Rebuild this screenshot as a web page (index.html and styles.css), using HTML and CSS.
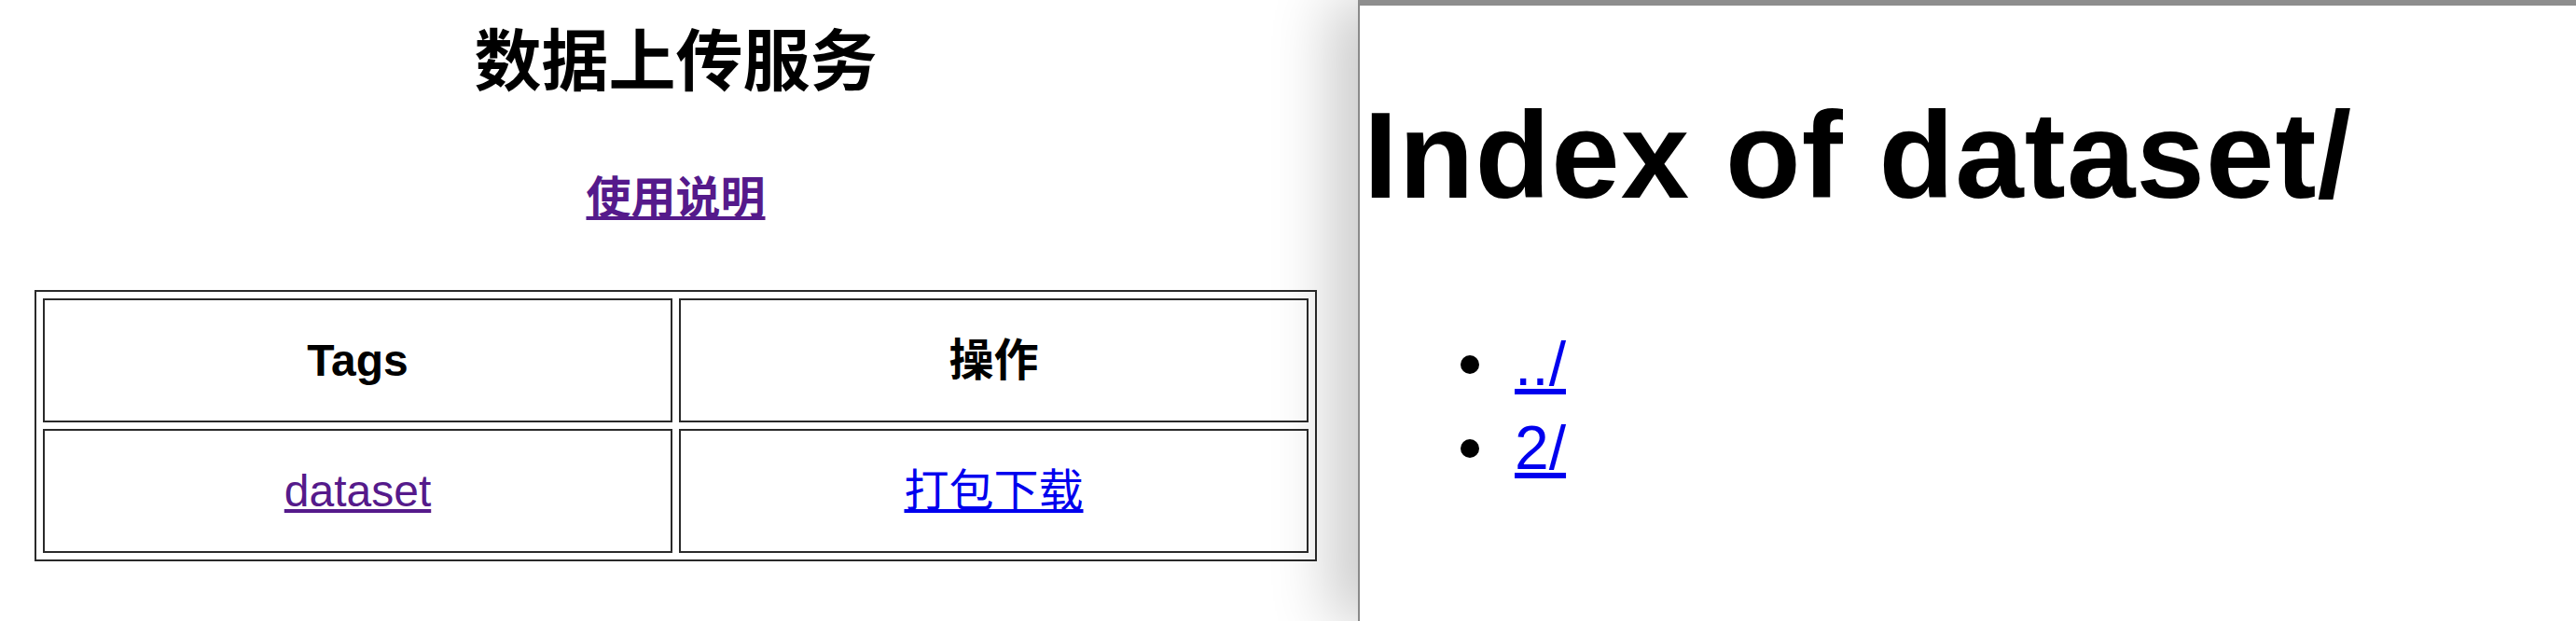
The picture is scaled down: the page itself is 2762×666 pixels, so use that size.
FILE: index.html
```html
<!DOCTYPE html>
<html lang="zh-CN">
<head>
<meta charset="utf-8">
<title>数据上传服务</title>
<link rel="stylesheet" href="styles.css">
</head>
<body>
<div class="desk">
  <section class="win win-left">
    <h2 class="title">数据上传服务</h2>
    <p class="help"><a class="visited" href="#">使用说明</a></p>
    <table class="tags">
      <tr><th>Tags</th><th>操作</th></tr>
      <tr><td><a class="visited" href="#">dataset</a></td><td><a href="#">打包下载</a></td></tr>
    </table>
  </section>
  <section class="win win-right">
    <h1 class="index-title">Index of dataset/</h1>
    <ul class="listing">
      <li><a href="#">../</a></li>
      <li><a href="#">2/</a></li>
    </ul>
  </section>
</div>
</body>
</html>
```

FILE: styles.css
```css
html, body {
  margin: 0;
  padding: 0;
  background: #fff;
}
body {
  font-family: "Liberation Sans", "Noto Sans CJK SC", sans-serif;
  color: #000;
}
.desk {
  display: flex;
  height: 666px;
  overflow: hidden;
}
.win-left {
  flex: 0 0 1456px;
  box-sizing: border-box;
  padding: 0 44px 0 37px;
}
.title {
  margin: 16px 0 0;
  font-size: 72px;
  line-height: 100px;
  font-weight: bold;
  text-align: center;
}
.help {
  margin: 68.6px 0 0;
  font-size: 48px;
  line-height: 55px;
  font-weight: bold;
  text-align: center;
}
a {
  color: #0000ee;
  text-decoration: underline;
}
a.visited {
  color: #551a8b;
}
.tags {
  margin-top: 71.4px;
  width: 100%;
  table-layout: fixed;
  border: 2px solid #2a2a2a;
  border-spacing: 7.5px;
}
.tags th,
.tags td {
  border: 2px solid #2a2a2a;
  padding: 37px 2px;
  font-size: 48px;
  line-height: 55px;
  text-align: center;
}
.tags th {
  font-weight: bold;
}
.tags td {
  font-weight: normal;
}
.win-right {
  flex: 1;
  position: relative;
  z-index: 1;
  background: #fff;
  border-left: 2px solid #8a8a8a;
  border-top: 6px solid #8e8e8e;
  padding-left: 4px;
  box-shadow: -30px 0 60px rgba(0, 0, 0, 0.2);
}
.index-title {
  margin: 68px 0 86px;
  font-size: 132px;
  line-height: 185px;
  font-weight: bold;
  letter-spacing: 1.1px;
}
.listing {
  margin: 0;
  padding-left: 162px;
  font-size: 66px;
  line-height: 90px;
  list-style: none;
}
.listing li::before {
  content: "";
  display: inline-block;
  width: 20px;
  height: 20px;
  border-radius: 50%;
  background: #000;
  margin-left: -58px;
  margin-right: 38px;
  vertical-align: 12px;
}
```
